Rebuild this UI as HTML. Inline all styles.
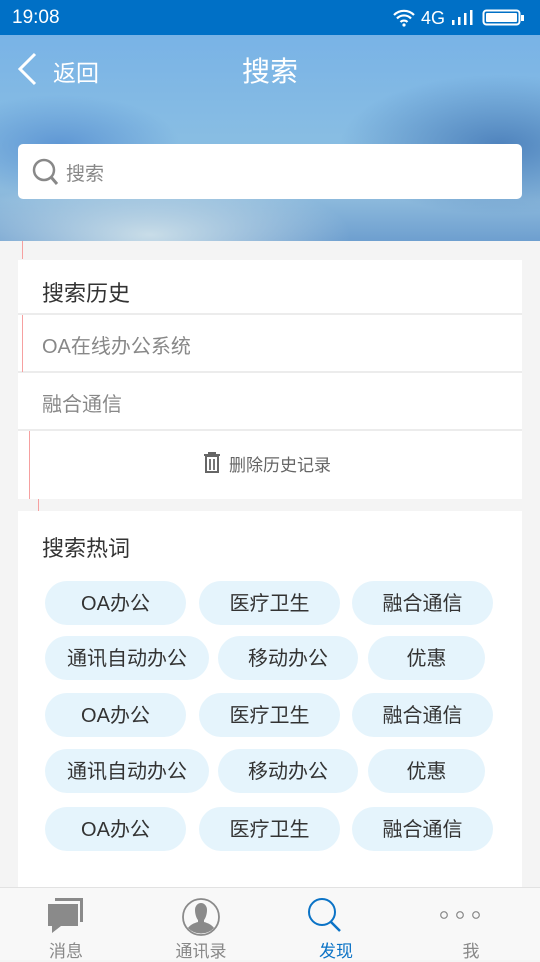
<!DOCTYPE html>
<html><head><meta charset="utf-8"><style>
*{margin:0;padding:0;box-sizing:border-box}
body{width:540px;height:960px;overflow:hidden;background:#f4f4f4;font-family:"Liberation Sans","Noto Sans CJK SC",sans-serif;position:relative}
.sb{position:absolute;top:0;left:0;width:540px;height:35px;background:#0070c6;color:#fff;font-size:19px}
.hd{position:absolute;top:35px;left:0;width:540px;height:206px;background:radial-gradient(ellipse 120px 50px at 60px 110px,#5f97d4 0%,transparent 100%),radial-gradient(ellipse 160px 70px at 500px 110px,#4f83bd 0%,transparent 100%),radial-gradient(ellipse 200px 60px at 150px 200px,#c9dde8 0%,transparent 100%),linear-gradient(180deg,#79b3e6 0%,#88bde3 50%,#8cb9dc 80%,#6e9fcf 100%)}
.srch{position:absolute;left:18px;top:144px;width:504px;height:55px;background:#fff;border-radius:5px}
.card{position:absolute;left:18px;width:504px;background:#fff}
.row{position:absolute;left:0;width:504px;border-top:2px solid #ececec}
.chip{position:absolute;height:44px;border-radius:22px;background:#e5f4fc;color:#333;font-size:20px;text-align:center;line-height:47px}
.tab{position:absolute;top:887px;left:0;width:540px;height:73px;background:#f8f8f8;border-top:1px solid #e2e2e2}
.tl{position:absolute;top:49px;font-size:17px;color:#888;width:100px;text-align:center}
.rl{position:absolute;width:1px;background:#f6a0a0}
</style></head><body>
<div class="sb"><span style="position:absolute;left:12px;top:7px">19:08</span>
<svg style="position:absolute;left:392px;top:8px" width="24" height="19" viewBox="0 0 24 19"><path d="M2 7a14 14 0 0 1 20 0M5 10.5a9.5 9.5 0 0 1 14 0M8.5 14a5 5 0 0 1 7 0" stroke="#fff" stroke-width="2.2" fill="none"/><circle cx="12" cy="17" r="1.6" fill="#fff"/></svg>
<span style="position:absolute;left:421px;top:8px;font-size:18px">4G</span>
<svg style="position:absolute;left:451px;top:9px" width="26" height="17"><rect x="1" y="11" width="2.5" height="5" fill="#fff"/><rect x="7" y="8" width="2.5" height="8" fill="#fff"/><rect x="13" y="4" width="2.5" height="12" fill="#fff"/><rect x="19" y="1" width="2.5" height="15" fill="#fff"/></svg>
<svg style="position:absolute;left:482px;top:9px" width="44" height="18"><rect x="1.5" y="1.5" width="36" height="14" rx="3" stroke="#fff" stroke-width="2" fill="none"/><rect x="4" y="4" width="31" height="9" rx="1" fill="#fff"/><rect x="39" y="6" width="3" height="6" fill="#fff"/></svg>
</div>
<div class="hd">
<svg style="position:absolute;left:16px;top:17px" width="22" height="34"><path d="M19 2L4 17l15 15" stroke="#fff" stroke-width="3" fill="none"/></svg>
<div style="position:absolute;left:53px;top:19px;color:#fff;font-size:23px">返回</div>
<div style="position:absolute;left:0;width:540px;top:15px;text-align:center;color:#fff;font-size:28px">搜索</div>
</div>
<div class="srch"><svg style="position:absolute;left:14px;top:14px" width="28" height="30"><circle cx="12" cy="12" r="10" stroke="#888" stroke-width="2.5" fill="none"/><path d="M19 19l6 7" stroke="#888" stroke-width="3"/></svg>
<div style="position:absolute;left:48px;top:15px;font-size:19px;color:#888">搜索</div></div>

<div class="card" style="top:260px;height:239px">
<div style="position:absolute;left:24px;top:16px;font-size:22px;color:#333">搜索历史</div>
<div class="row" style="top:53px;height:58px"><div style="position:absolute;left:24px;top:15px;font-size:20px;color:#888">OA在线办公系统</div></div>
<div class="row" style="top:111px;height:58px"><div style="position:absolute;left:24px;top:15px;font-size:20px;color:#888">融合通信</div></div>
<div class="row" style="top:169px;height:70px">
<svg style="position:absolute;left:185px;top:21px" width="18" height="22"><path d="M1 3h16M6 3V1h6v2M3 4h12v16H3z" stroke="#666" stroke-width="2" fill="none"/><path d="M7 7v11M11 7v11" stroke="#666" stroke-width="1.8"/></svg>
<div style="position:absolute;left:211px;top:20px;font-size:17px;color:#666">删除历史记录</div></div>
</div>
<div class="rl" style="left:22px;top:241px;height:18px"></div>
<div class="rl" style="left:22px;top:315px;height:57px"></div>
<div class="rl" style="left:29px;top:431px;height:68px"></div>
<div class="rl" style="left:38px;top:499px;height:12px"></div>

<div class="card" style="top:511px;height:376px">
<div style="position:absolute;left:24px;top:20px;font-size:22px;color:#333">搜索热词</div>
</div>
<div class="chip" style="left:45px;top:581px;width:141px">OA办公</div>
<div class="chip" style="left:199px;top:581px;width:141px">医疗卫生</div>
<div class="chip" style="left:352px;top:581px;width:141px">融合通信</div>
<div class="chip" style="left:45px;top:636px;width:164px">通讯自动办公</div>
<div class="chip" style="left:218px;top:636px;width:140px">移动办公</div>
<div class="chip" style="left:368px;top:636px;width:117px">优惠</div>
<div class="chip" style="left:45px;top:693px;width:141px">OA办公</div>
<div class="chip" style="left:199px;top:693px;width:141px">医疗卫生</div>
<div class="chip" style="left:352px;top:693px;width:141px">融合通信</div>
<div class="chip" style="left:45px;top:749px;width:164px">通讯自动办公</div>
<div class="chip" style="left:218px;top:749px;width:140px">移动办公</div>
<div class="chip" style="left:368px;top:749px;width:117px">优惠</div>
<div class="chip" style="left:45px;top:807px;width:141px">OA办公</div>
<div class="chip" style="left:199px;top:807px;width:141px">医疗卫生</div>
<div class="chip" style="left:352px;top:807px;width:141px">融合通信</div>

<div class="tab">
<svg style="position:absolute;left:47px;top:9px" width="38" height="37"><path d="M8 1h28v24h-3V4H8z" fill="#8a8a8a"/><path d="M1 7h30v22H14l-9 7v-7H1z" fill="#8a8a8a"/></svg>
<svg style="position:absolute;left:181px;top:9px" width="40" height="40"><circle cx="20" cy="20" r="18" stroke="#8a8a8a" stroke-width="1.8" fill="none"/><path d="M14 13a6 7 0 0 1 12 0c0 5-2 9-3 10v2c4 1 8 3 10 6a18 18 0 0 1-26 0c2-3 6-5 10-6v-2c-1-1-3-5-3-10z" fill="#8a8a8a"/></svg>
<svg style="position:absolute;left:307px;top:9px" width="40" height="42"><circle cx="15" cy="15" r="13" stroke="#0b73c6" stroke-width="2" fill="none"/><path d="M24 25l9 9" stroke="#0b73c6" stroke-width="2.5"/></svg>
<svg style="position:absolute;left:438px;top:22px" width="50" height="12"><circle cx="6" cy="5" r="3.3" stroke="#888" stroke-width="1.2" fill="none"/><circle cx="22" cy="5" r="3.3" stroke="#888" stroke-width="1.2" fill="none"/><circle cx="38" cy="5" r="3.3" stroke="#888" stroke-width="1.2" fill="none"/></svg>
<div class="tl" style="left:16px">消息</div>
<div class="tl" style="left:151px">通讯录</div>
<div class="tl" style="left:286px;color:#0b73c6">发现</div>
<div class="tl" style="left:421px">我</div>
</div>
</body></html>
